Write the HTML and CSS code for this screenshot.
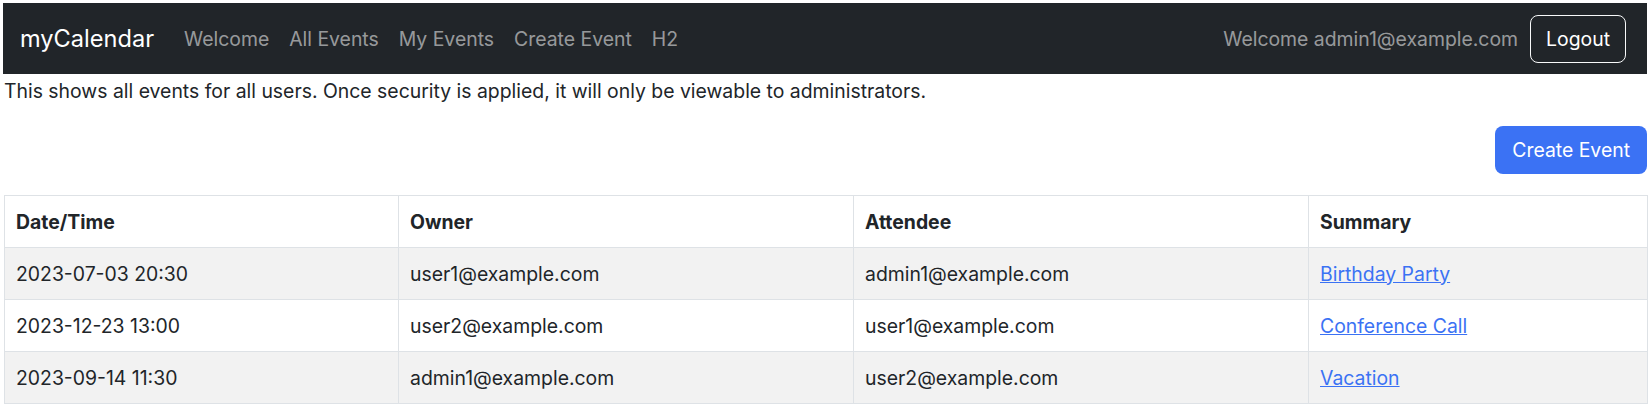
FILE: index.html
```html
<!DOCTYPE html>
<html lang="en">
<head>
<meta charset="utf-8">
<title>myCalendar</title>
<link rel="stylesheet" href="styles.css">
</head>
<body>
<nav class="navbar">
  <a class="brand" href="#">myCalendar</a>
  <ul class="nav-links">
    <li><a href="#">Welcome</a></li>
    <li><a href="#">All Events</a></li>
    <li><a href="#">My Events</a></li>
    <li><a href="#">Create Event</a></li>
    <li><a href="#">H2</a></li>
  </ul>
  <div class="nav-right">
    <span class="user-text">Welcome admin1@example.com</span>
    <button class="btn-logout" type="button">Logout</button>
  </div>
</nav>
<main class="content">
  <p class="intro">This shows all events for all users. Once security is applied, it will only be viewable to administrators.</p>
  <div class="actions">
    <a class="btn-primary" href="#">Create Event</a>
  </div>
  <table class="events">
    <colgroup>
      <col class="c-date">
      <col class="c-owner">
      <col class="c-attendee">
      <col class="c-summary">
    </colgroup>
    <thead>
      <tr><th>Date/Time</th><th>Owner</th><th>Attendee</th><th>Summary</th></tr>
    </thead>
    <tbody>
      <tr><td>2023-07-03 20:30</td><td>user1@example.com</td><td>admin1@example.com</td><td><a href="#">Birthday Party</a></td></tr>
      <tr><td>2023-12-23 13:00</td><td>user2@example.com</td><td>user1@example.com</td><td><a href="#">Conference Call</a></td></tr>
      <tr><td>2023-09-14 11:30</td><td>admin1@example.com</td><td>user2@example.com</td><td><a href="#">Vacation</a></td></tr>
    </tbody>
  </table>
</main>
</body>
</html>
```
FILE: styles.css
```css
* { box-sizing: border-box; }
html, body { margin: 0; }
body {
  padding: 3px 3px 0 3px;
  font-family: Inter, "Noto Sans", "Liberation Sans", sans-serif;
  font-size: 19.4px;
  line-height: 30px;
  color: #212529;
  background: #fff;
}
.navbar {
  display: flex;
  align-items: center;
  height: 71px;
  padding: 0 21px 0 17px;
  background: #212529;
}
.brand {
  font-size: 23.6px;
  color: #fff;
  text-decoration: none;
  margin-right: 20px;
  line-height: 36px;
}
.nav-links {
  display: flex;
  list-style: none;
  margin: 0;
  padding: 0;
  flex: 1;
}
.nav-links a {
  display: block;
  padding: 0 10px;
  color: rgba(255, 255, 255, 0.55);
  text-decoration: none;
}
.nav-right {
  display: flex;
  align-items: center;
  gap: 12px;
}
.user-text { color: rgba(255, 255, 255, 0.55); }
.btn-logout {
  height: 48px;
  padding: 0 15px;
  font: inherit;
  color: #fff;
  background: transparent;
  border: 1px solid #f8f9fa;
  border-radius: 8px;
}
.content { padding-left: 1px; }
.intro { margin: 0 0 20px; padding-top: 2px; }
.actions {
  display: flex;
  justify-content: flex-end;
  margin-bottom: 21px;
}
.btn-primary {
  display: inline-flex;
  align-items: center;
  height: 48px;
  padding: 0 17px;
  color: #fff;
  background: #3b72f4;
  border-radius: 8px;
  text-decoration: none;
}
.events {
  width: 100%;
  border-collapse: collapse;
  table-layout: fixed;
  border: 1px solid #dee2e6;
}
.c-date { width: 394px; }
.c-owner { width: 455px; }
.c-attendee { width: 455px; }
.c-summary { width: 339px; }
.events th, .events td {
  height: 52px;
  padding: 0 11px;
  text-align: left;
  border: 1px solid #dee2e6;
  vertical-align: middle;
}
.events th { font-weight: 700; }
.events tbody tr:nth-child(odd) td { background: #f2f2f2; }
.events a { color: #3b72f4; text-decoration: underline; }
```
